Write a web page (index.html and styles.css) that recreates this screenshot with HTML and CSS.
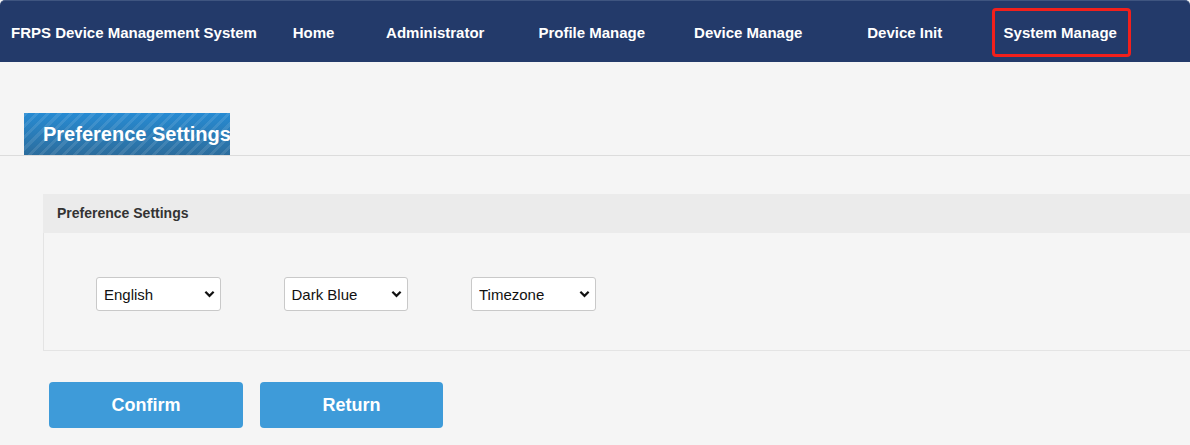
FILE: index.html
```html
<!DOCTYPE html>
<html lang="en">
<head>
<meta charset="utf-8">
<title>FRPS Device Management System</title>
<link rel="stylesheet" href="styles.css">
</head>
<body>
<header class="navbar">
  <div class="brand">FRPS Device Management System</div>
  <nav class="menu">
    <a class="item item-home" href="#">Home</a>
    <a class="item" href="#">Administrator</a>
    <a class="item" href="#">Profile Manage</a>
    <a class="item" href="#">Device Manage</a>
    <a class="item" href="#">Device Init</a>
    <a class="item" href="#"><span class="active">System Manage</span></a>
  </nav>
</header>
<main class="content">
  <div class="title-row">
    <h1 class="title-tab">Preference Settings</h1>
  </div>
  <section class="panel">
    <div class="panel-head">Preference Settings</div>
    <div class="panel-body">
      <div class="select-wrap">
        <select class="sel"><option>English</option></select>
        <svg class="chev" viewBox="0 0 12 8" width="11" height="8"><path d="M1.5 1.5 L6 6 L10.5 1.5" fill="none" stroke="#111" stroke-width="2.4"/></svg>
      </div>
      <div class="select-wrap">
        <select class="sel"><option>Dark Blue</option></select>
        <svg class="chev" viewBox="0 0 12 8" width="11" height="8"><path d="M1.5 1.5 L6 6 L10.5 1.5" fill="none" stroke="#111" stroke-width="2.4"/></svg>
      </div>
      <div class="select-wrap">
        <select class="sel"><option>Timezone</option></select>
        <svg class="chev" viewBox="0 0 12 8" width="11" height="8"><path d="M1.5 1.5 L6 6 L10.5 1.5" fill="none" stroke="#111" stroke-width="2.4"/></svg>
      </div>
    </div>
  </section>
  <div class="actions">
    <button class="btn btn-confirm">Confirm</button>
    <button class="btn btn-return">Return</button>
  </div>
</main>
</body>
</html>
```
FILE: styles.css
```css
html, body {
  margin: 0;
  padding: 0;
}
body {
  background: #f5f5f5;
  font-family: "Liberation Sans", Arial, sans-serif;
  overflow: hidden;
}
.navbar {
  box-sizing: border-box;
  height: 62px;
  padding-top: 2px;
  background: #233a6a;
  border-top: 1px solid #3f5580;
  border-radius: 5px 5px 0 0;
  display: flex;
  align-items: center;
  color: #fff;
}
.brand {
  width: 259px;
  padding-left: 11px;
  font-size: 15px;
  font-weight: bold;
  white-space: nowrap;
}
.menu {
  display: flex;
  align-items: center;
  height: 100%;
}
.item {
  width: 156.5px;
  text-align: center;
  color: #fff;
  text-decoration: none;
  font-size: 15px;
  font-weight: bold;
  white-space: nowrap;
}
.item-home {
  width: 87px;
}
.active {
  display: inline-block;
  padding: 14px 11px 14px 9px;
  border: 3px solid #f2201c;
  border-radius: 4px;
  line-height: 15px;
}
.content {
  padding: 51px 0 0 0;
}
.title-row {
  padding-left: 24px;
  border-bottom: 1px solid #dcdcdc;
  height: 42px;
}
.title-tab {
  margin: 0;
  width: 187px;
  height: 42px;
  padding-left: 19px;
  overflow: hidden;
  white-space: nowrap;
  color: #fff;
  font-size: 20px;
  font-weight: bold;
  line-height: 42px;
  background:
    repeating-linear-gradient(135deg, rgba(255,255,255,0.10) 0 3px, rgba(255,255,255,0) 3px 8px),
    linear-gradient(#278bd3, #2c6d9d);
}
.panel {
  margin: 38px 0 0 43px;
}
.panel-head {
  height: 39px;
  line-height: 39px;
  background: #ebebeb;
  padding-left: 14px;
  font-size: 14px;
  font-weight: bold;
  color: #333;
}
.panel-body {
  border-left: 1px solid #e4e4e4;
  border-bottom: 1px solid #e4e4e4;
  box-sizing: border-box;
  height: 118px;
  padding: 44px 0 0 52px;
  display: flex;
  gap: 63px;
  align-items: flex-start;
}
.select-wrap {
  position: relative;
  width: 124.5px;
  height: 34px;
}
.sel {
  appearance: none;
  -webkit-appearance: none;
  width: 100%;
  height: 34px;
  box-sizing: border-box;
  border: 1px solid #c9c9c9;
  border-radius: 3px;
  background: #fff;
  font-family: "Liberation Sans", Arial, sans-serif;
  font-size: 15px;
  color: #111;
  padding: 0 0 0 7px;
}
.chev {
  position: absolute;
  right: 6px;
  top: 13px;
  pointer-events: none;
}
.actions {
  display: flex;
  gap: 17px;
  margin: 31px 0 0 49px;
}
.btn {
  height: 46px;
  border: none;
  border-radius: 4px;
  background: #3e9bd9;
  color: #fff;
  font-family: "Liberation Sans", Arial, sans-serif;
  font-size: 18px;
  font-weight: bold;
}
.btn-confirm {
  width: 194px;
}
.btn-return {
  width: 183px;
}
```
